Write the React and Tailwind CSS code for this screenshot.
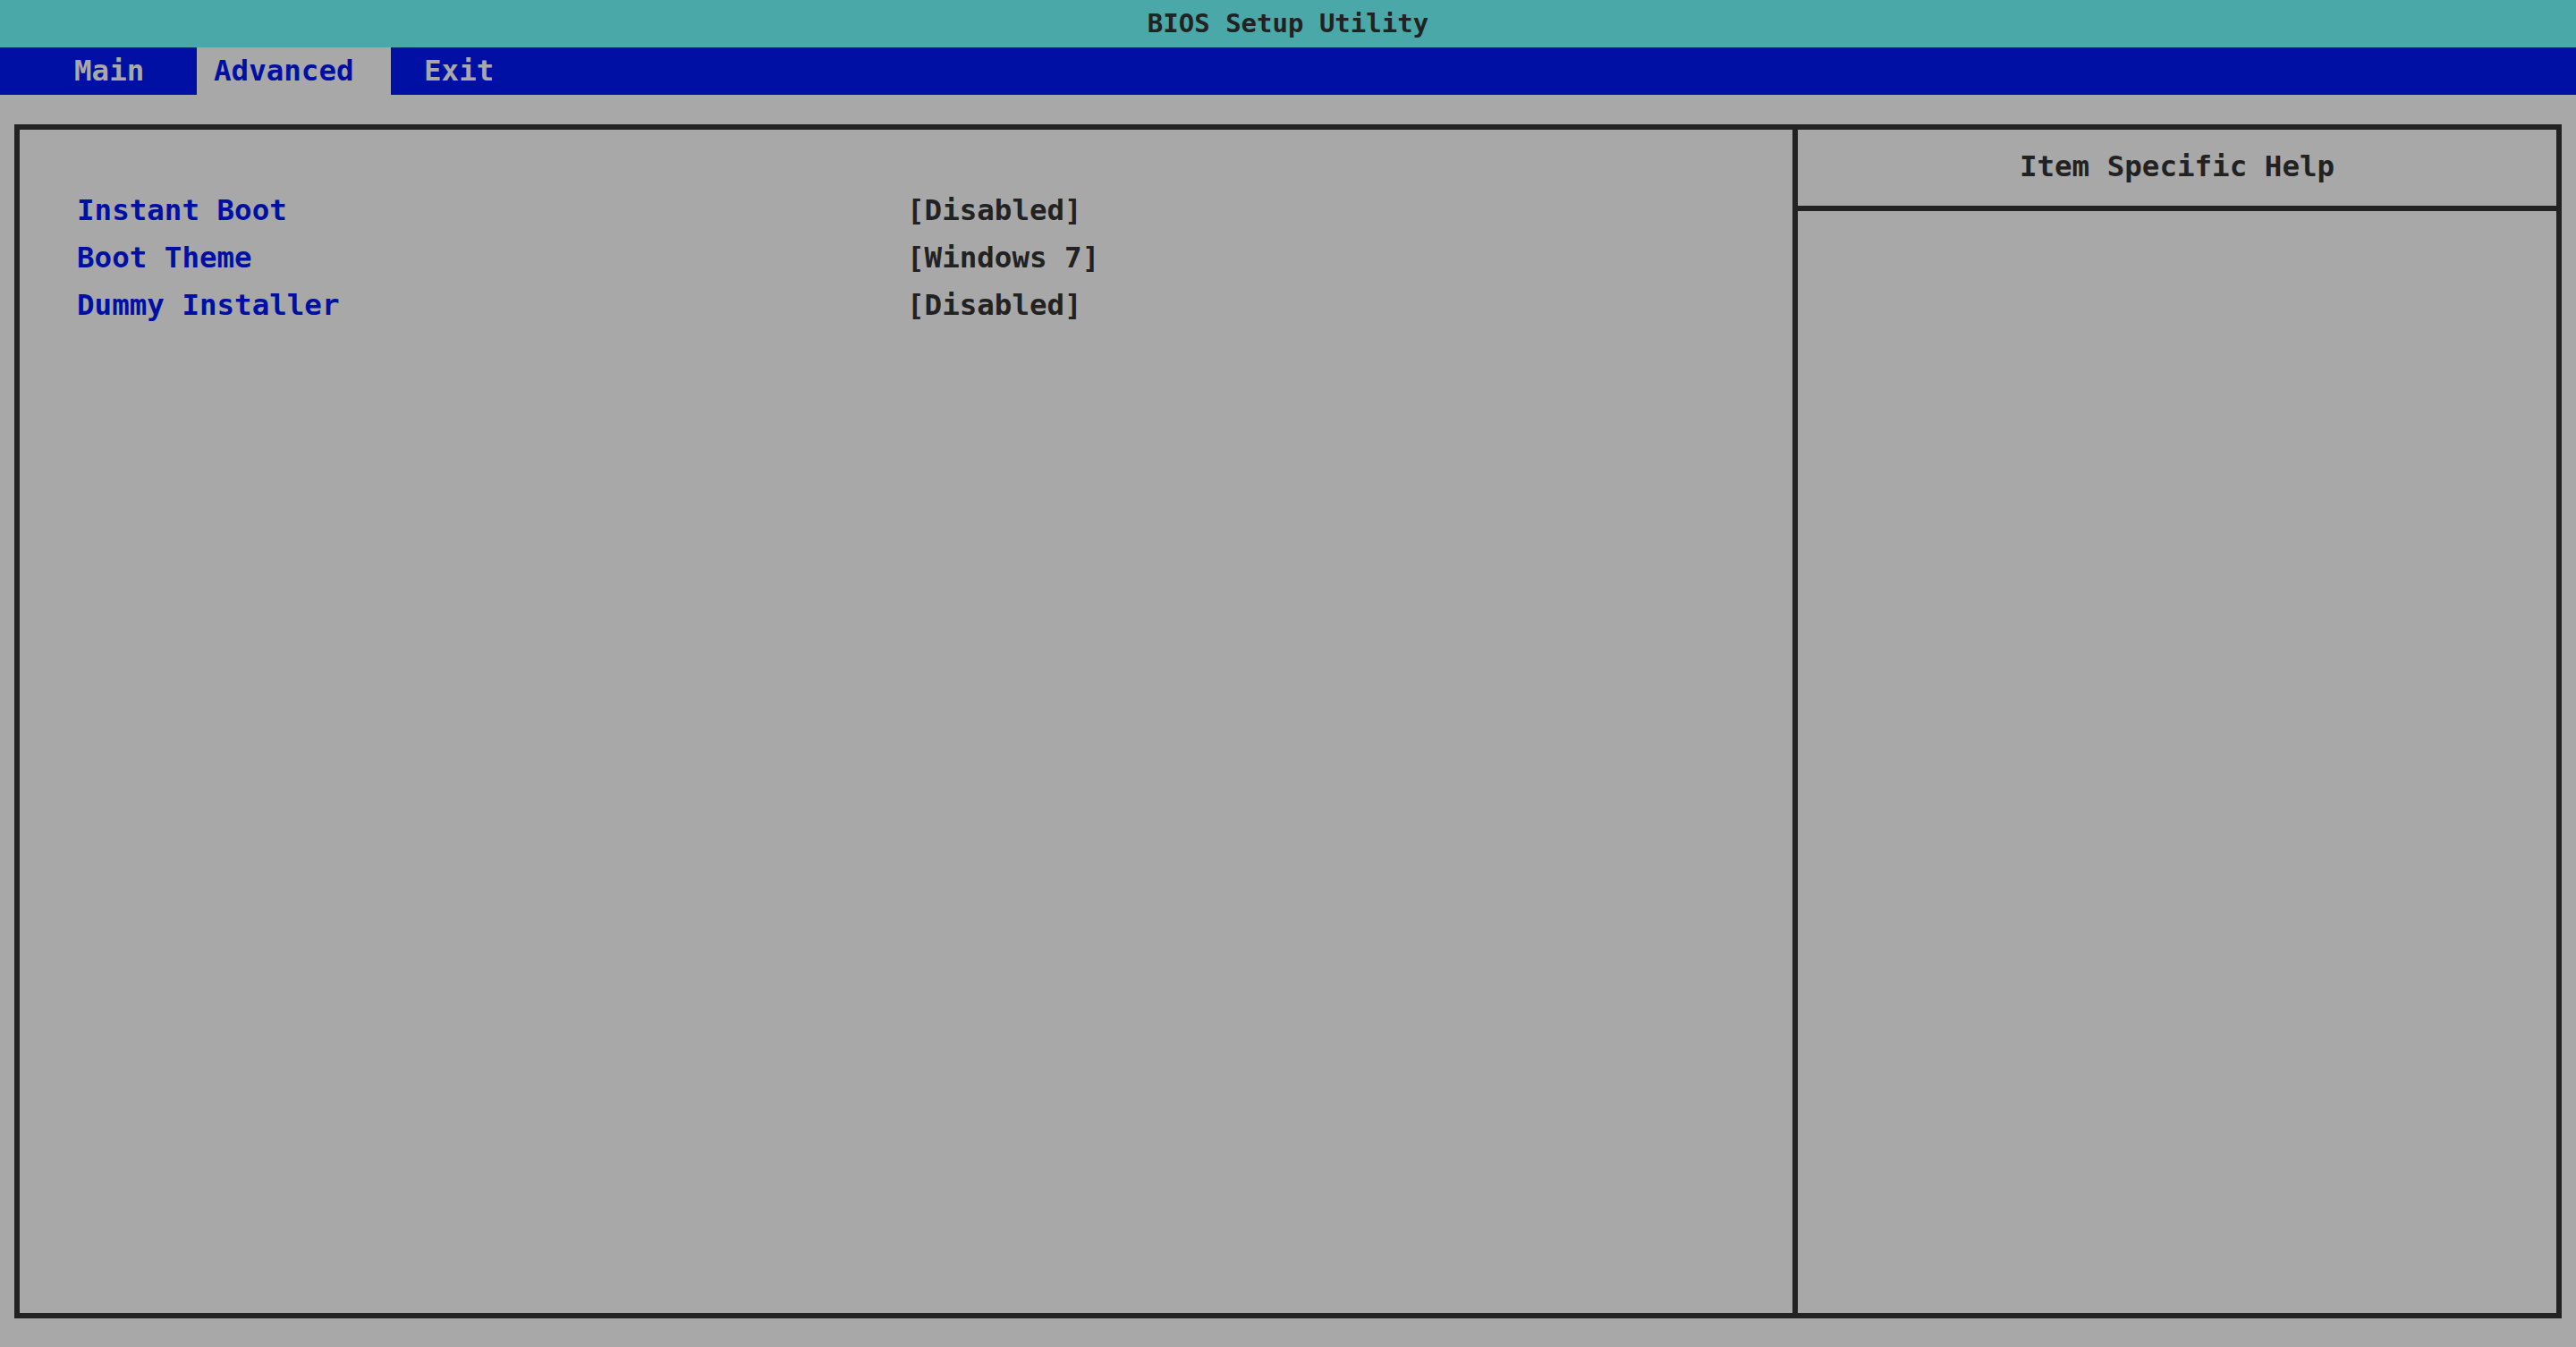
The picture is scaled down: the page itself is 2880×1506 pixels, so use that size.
import React from "react";

const tabs = [
  { label: "Main", box: "w-[220px] pl-[83px]", active: false },
  { label: "Advanced", box: "w-[217px] pl-[19px]", active: true },
  { label: "Exit", box: "pl-[37px]", active: false },
];

const items = [
  { label: "Instant Boot", value: "[Disabled]" },
  { label: "Boot Theme", value: "[Windows 7]" },
  { label: "Dummy Installer", value: "[Disabled]" },
];

export default function App() {
  return (
    <div
      className="h-[1506px] w-full flex flex-col bg-[#a8a8a8] font-bold"
      style={{ fontFamily: '"DejaVu Sans Mono", "Liberation Mono", monospace' }}
    >
      {/* title bar */}
      <div className="h-[53px] bg-[#4aa8a8] flex items-center justify-center text-[29px] text-[#222222]">
        BIOS Setup Utility
      </div>

      {/* menu tabs */}
      <div className="h-[53px] bg-[#0010a4] flex text-[32.5px] leading-[53px]">
        {tabs.map((t) => (
          <div
            key={t.label}
            className={
              t.active
                ? `${t.box} h-full bg-[#a8a8a8] text-[#0010a4]`
                : `${t.box} h-full text-[#a8a8a8]`
            }
          >
            {t.label}
          </div>
        ))}
      </div>

      {/* main frame */}
      <div className="flex-1 pt-[33px] pb-[32px] px-[16px] flex">
        <div className="flex-1 flex border-[6px] border-[#222222]">
          <div className="w-[1988px] border-r-[6px] border-[#222222] pt-[64px] pl-[64px]">
            {items.map((it) => (
              <div key={it.label} className="flex h-[53px] leading-[53px] text-[32.5px]">
                <span className="w-[928px] text-[#0010a4]">{it.label}</span>
                <span className="text-[#222222]">{it.value}</span>
              </div>
            ))}
          </div>
          <div className="flex-1 flex flex-col">
            <div className="h-[91px] pb-[2px] border-b-[6px] border-[#222222] flex items-center justify-center text-[32.5px] text-[#222222]">
              Item Specific Help
            </div>
            <div className="flex-1" />
          </div>
        </div>
      </div>
    </div>
  );
}
